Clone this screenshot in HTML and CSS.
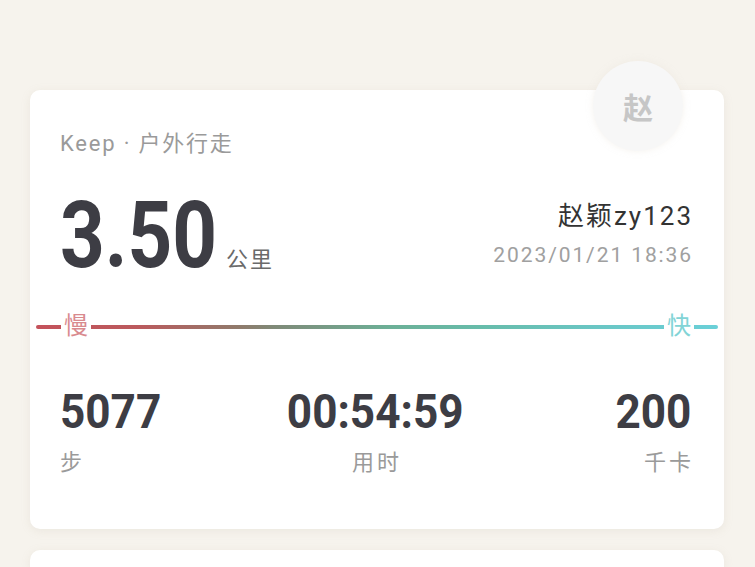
FILE: index.html
```html
<!DOCTYPE html>
<html lang="zh-CN">
<head>
    <meta charset="UTF-8">
    <meta name="viewport" content="width=device-width, initial-scale=1.0">
    <title>Keep 户外行走</title>
    <link rel="stylesheet" href="styles.css">
</head>
<body>
    <div class="page">
        <div class="card">
            <div class="avatar">赵</div>
            <div class="source">Keep · 户外行走</div>
            <div class="main">
                <div class="distance">
                    <span class="distance-value">3.50</span>
                    <span class="distance-unit">公里</span>
                </div>
                <div class="user">
                    <div class="user-name">赵颖zy123</div>
                    <div class="user-date">2023/01/21 18:36</div>
                </div>
            </div>
            <div class="pace">
                <span class="pace-label slow">慢</span>
                <span class="pace-label fast">快</span>
            </div>
            <div class="stats">
                <div class="stat">
                    <div class="stat-value">5077</div>
                    <div class="stat-label">步</div>
                </div>
                <div class="stat center">
                    <div class="stat-value">00:54:59</div>
                    <div class="stat-label">用时</div>
                </div>
                <div class="stat right">
                    <div class="stat-value">200</div>
                    <div class="stat-label">千卡</div>
                </div>
            </div>
        </div>
        <div class="card next"></div>
    </div>
</body>
</html>
```

FILE: styles.css
```css
body {
    margin: 0;
    padding: 0;
    background-color: #f6f3ed;
    font-family: Roboto, "Noto Sans CJK SC", sans-serif;
    overflow: hidden;
}
.page {
    padding: 90px 31px 0 30px;
}
.card {
    position: relative;
    background-color: #fff;
    border-radius: 10px;
    box-shadow: 0 2px 10px rgba(180, 170, 150, 0.15);
    padding: 40px 33px 53px 30px;
}
.card.next {
    margin-top: 21px;
    height: 18px;
    padding: 0;
    border-radius: 10px 10px 0 0;
}
.avatar {
    position: absolute;
    top: -29px;
    right: 41px;
    width: 90px;
    height: 90px;
    border-radius: 50%;
    background-color: #f7f7f7;
    box-shadow: 0 0 6px rgba(235, 230, 220, 0.5);
    color: #c6c6c6;
    font-size: 30px;
    font-weight: bold;
    line-height: 90px;
    text-align: center;
    font-family: "Noto Sans CJK SC", sans-serif;
}
.source {
    font-size: 22px;
    line-height: 28px;
    letter-spacing: 1.8px;
    color: #9a9a9a;
}
.main {
    display: flex;
    justify-content: space-between;
    align-items: flex-start;
    margin-top: 43px;
}
.distance {
    display: flex;
    align-items: baseline;
}
.distance-value {
    display: inline-block;
    font-weight: bold;
    font-size: 93px;
    line-height: 70px;
    color: #3d3d44;
    transform: scaleX(0.84);
    transform-origin: left;
}
.distance-unit {
    margin-left: -21px;
    font-size: 22px;
    letter-spacing: 2px;
    color: #6a6a6a;
}
.user {
    text-align: right;
    margin-right: -2px;
}
.user-name {
    font-size: 26px;
    line-height: 30px;
    letter-spacing: 2px;
    color: #333;
}
.user-date {
    margin-top: 11px;
    font-size: 21px;
    line-height: 26px;
    letter-spacing: 1.9px;
    color: #a0a0a0;
}
.pace {
    position: relative;
    margin: 52px -27px 0 -24px;
    height: 4px;
    border-radius: 2px;
    background: linear-gradient(90deg, #c4525b 0%, #bb5a5d 15%, #8f7b6c 30%, #7f8a78 35%, #6cb097 52%, #67bcaa 65%, #6ac6c4 82%, #6ad0d8 100%);
}
.pace-label {
    position: absolute;
    top: -13px;
    padding: 0 3px;
    background-color: #fff;
    font-size: 24px;
    line-height: 28px;
}
.slow {
    left: 25px;
    color: #d98a8e;
}
.fast {
    right: 24px;
    color: #82d4d6;
}
.stats {
    display: grid;
    grid-template-columns: 1fr 1fr 1fr;
    margin-top: 58px;
}
.stat-value {
    font-weight: bold;
    font-size: 49px;
    line-height: 50px;
    color: #3d3d44;
    transform: scaleX(0.9);
    transform-origin: left;
}
.stat-label {
    margin-top: 13px;
    font-size: 22px;
    line-height: 26px;
    letter-spacing: 3px;
    color: #9a9a9a;
}
.center {
    text-align: center;
}
.center .stat-value {
    transform-origin: center;
}
.center .stat-label {
    margin-left: 3px;
}
.right {
    text-align: right;
}
.right .stat-value {
    transform-origin: right;
}
.right .stat-label {
    margin-right: -3px;
}
```
